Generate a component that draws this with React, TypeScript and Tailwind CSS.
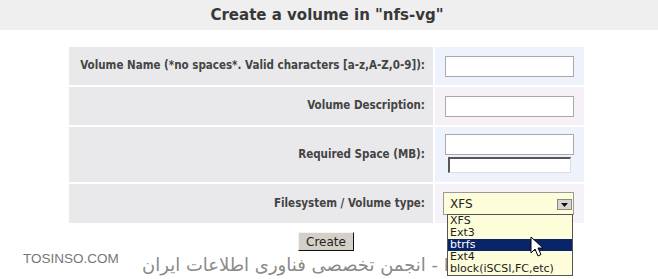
import React from "react";

const rows = [
  { label: "Volume Name (*no spaces*. Valid characters [a-z,A-Z,0-9]):", h: "h-[38px]", bg: "bg-[#eef2fa]" },
  { label: "Volume Description:", h: "h-[38px]", bg: "bg-[#f6f0f7]" },
  { label: "Required Space (MB):", h: "h-[55px]", bg: "bg-[#eef2fa]" },
  { label: "Filesystem / Volume type:", h: "h-[39px]", bg: "bg-[#f6f3f8]" },
];

const options = ["XFS", "Ext3", "btrfs", "Ext4", "block(iSCSI,FC,etc)"];

function TextBox() {
  return <div className="w-[129px] h-[21px] bg-white border border-[#a9a9ad]" />;
}

function CellInput({ index }: { index: number }) {
  if (index === 2) {
    return (
      <div className="flex flex-col pt-[7px] pl-[10px] gap-[2px]">
        <TextBox />
        <div className="ml-[3px] w-[123px] h-[16px] bg-white border-t-2 border-l-2 border-[#555] border-r border-b border-r-[#ddd] border-b-[#ddd]" />
      </div>
    );
  }
  if (index === 3) {
    return (
      <div className="flex items-center h-full pl-[8px]">
        <div className="relative w-[131px] h-[23px] bg-[#fdfdda] border border-[#9a9a9a] flex items-center pl-[6px] text-[12px] text-[#222]">
          XFS
          <div className="absolute right-[1px] top-[6px] w-[15px] h-[11px] bg-[#d8d6cf] border border-[#888] flex items-center justify-center">
            <svg width="7" height="4" viewBox="0 0 7 4">
              <path d="M0 0h7L3.5 4z" fill="#111" />
            </svg>
          </div>
        </div>
      </div>
    );
  }
  return (
    <div className="flex items-center h-full pl-[10px]">
      <TextBox />
    </div>
  );
}

export default function App() {
  return (
    <div className="relative w-[658px] h-[279px] overflow-hidden bg-white font-['DejaVu_Sans',sans-serif]">
      <div className="h-[30px] bg-[#efeff0] flex items-center justify-center pr-[4px] text-[15px] font-bold text-[#383838]">
        Create a volume in "nfs-vg"
      </div>

      <div className="pt-[17px]">
        <div className="ml-[69px] w-[515px] grid grid-cols-[364px_149px] gap-[2px]">
          {rows.map((r, i) => (
            <React.Fragment key={i}>
              <div className={`${r.h} bg-[#e9e9eb] flex items-center justify-end pr-[8px] whitespace-nowrap text-[11.5px] font-bold text-[#444] font-['DejaVu_Sans_Condensed','DejaVu_Sans',sans-serif]`}>
                {r.label}
              </div>
              <div className={`${r.h} ${r.bg}`}>
                <CellInput index={i} />
              </div>
            </React.Fragment>
          ))}
        </div>

        <div className="flex justify-center pt-[9px] pr-[6px]">
          <button className="w-[56px] h-[19px] bg-[#d4d0c8] border border-t-[#f4f4f4] border-l-[#f4f4f4] border-r-[#111] border-b-[#111] text-[12px] text-[#222] leading-none">
            Create
          </button>
        </div>
      </div>

      {/* watermark */}
      <div className="absolute left-[23px] top-[249px] text-[13.5px] text-[#777] font-['Liberation_Sans',sans-serif]">
        TOSINSO.COM
      </div>
      <div dir="rtl" className="absolute left-[142px] top-[251px] text-[18px] text-[#8a8a8a] whitespace-nowrap font-['DejaVu_Sans',sans-serif]">
        ITPro.ir - انجمن تخصصی فناوری اطلاعات ایران
      </div>

      {/* open dropdown list */}
      <div className="absolute left-[447px] top-[214px] w-[126px] bg-[#fdfdda] border border-[#555] text-[11px] text-[#222]">
        {options.map((o) => (
          <div
            key={o}
            className={`h-[12px] leading-[12px] pl-[2px] ${o === "btrfs" ? "bg-[#0a246a] text-white" : ""}`}
          >
            {o}
          </div>
        ))}
      </div>

      {/* mouse cursor */}
      <svg className="absolute left-[530px] top-[236px]" width="13" height="21" viewBox="0 0 13 21">
        <path d="M1 1v16l4-4 3 7 3-1.5-3-6.5h5z" fill="#fff" stroke="#000" strokeWidth="1" />
      </svg>
    </div>
  );
}
